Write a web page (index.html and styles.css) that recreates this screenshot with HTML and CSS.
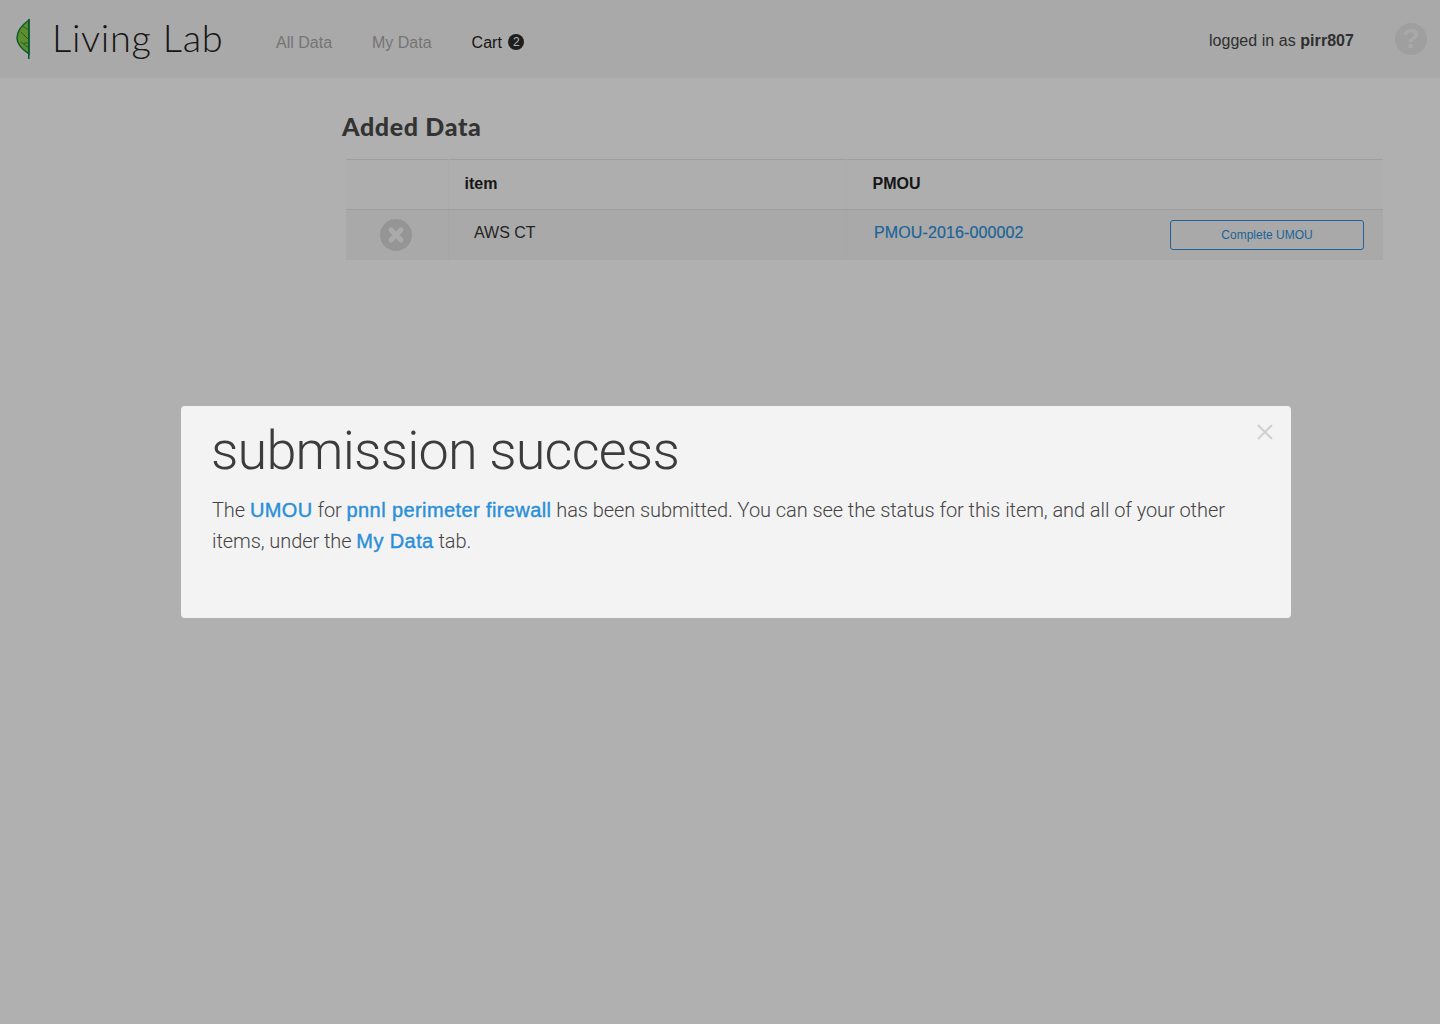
FILE: index.html
```html
<!DOCTYPE html>
<html lang="en">
<head>
    <meta charset="UTF-8">
    <meta name="viewport" content="width=device-width, initial-scale=1.0">
    <title>Living Lab</title>
    <link rel="stylesheet" href="styles.css">
</head>
<body>

    <!-- Top navigation -->
    <header class="topbar">
        <a class="brand" href="#">
            <svg class="leaf" width="16" height="42" viewBox="0 0 16 42">
                <path d="M13 2 C6 7 1 13 1 20 C1 27 7 32 13 36 Z" fill="#88cc40" stroke="#118045" stroke-width="1.5"/>
                <path d="M12.8 1 V41" stroke="#118045" stroke-width="1.6" fill="none"/>
                <path d="M13 12 L6 8 M13 22 L5 14 M13 30 L5 24 M8 25 L12 25" stroke="#118045" stroke-width="0.8" fill="none"/>
            </svg>
            <span class="brand-name">Living Lab</span>
        </a>
        <nav class="nav">
            <a class="nav-link" href="#">All Data</a>
            <a class="nav-link" href="#">My Data</a>
            <a class="nav-link active" href="#">Cart <span class="cart-count">2</span></a>
        </nav>
        <div class="user">logged in as <b>pirr807</b></div>
        <a class="help" href="#">?</a>
    </header>

    <!-- Cart contents -->
    <main class="content">
        <h1 class="page-title">Added Data</h1>
        <table class="data-table">
            <thead>
                <tr>
                    <th class="col-remove"></th>
                    <th class="col-item">item</th>
                    <th class="col-pmou">PMOU</th>
                    <th class="col-action"></th>
                </tr>
            </thead>
            <tbody>
                <tr>
                    <td class="cell-remove">
                        <svg width="32" height="32" viewBox="0 0 32 32">
                            <circle cx="16" cy="16" r="16" fill="#d6d6d6"/>
                            <path d="M11 11 L21 21 M21 11 L11 21" stroke="#f4f4f4" stroke-width="5" stroke-linecap="round"/>
                        </svg>
                    </td>
                    <td class="cell-item">AWS CT</td>
                    <td class="cell-pmou"><a href="#">PMOU-2016-000002</a></td>
                    <td class="cell-action"><button type="button" class="btn-outline">Complete UMOU</button></td>
                </tr>
            </tbody>
        </table>
    </main>

    <!-- Success dialog -->
    <div class="overlay">
        <div class="modal">
            <button type="button" class="modal-close">
                <svg width="18" height="18" viewBox="0 0 18 18">
                    <path d="M2 2 L16 16 M16 2 L2 16" stroke="#cfcfcf" stroke-width="2" fill="none"/>
                </svg>
            </button>
            <h2 class="modal-title">submission success</h2>
            <p class="modal-text">The <a href="#">UMOU</a> for <a href="#">pnnl perimeter firewall</a> has been submitted. You can see the status for this item, and all of your other items, under the <a href="#">My Data</a> tab.</p>
        </div>
    </div>

</body>
</html>
```

FILE: styles.css
```css
* {
    box-sizing: border-box;
}
body {
    font-family: "Liberation Sans", Arial, sans-serif;
    margin: 0;
    padding: 0;
    min-height: 1024px;
    background-color: #fcfcfc;
    color: #333;
}
a {
    text-decoration: none;
}

.topbar {
    display: flex;
    align-items: center;
    height: 78px;
    background-color: #f3f3f3;
    padding-left: 16px;
}
.brand {
    display: flex;
    align-items: center;
    width: 260px;
    color: #222;
}
.brand-name {
    font-family: Lato, sans-serif;
    font-weight: 300;
    font-size: 38px;
    letter-spacing: 0.7px;
    margin-left: 20px;
    margin-top: -5px;
}
.nav {
    display: flex;
    gap: 40px;
    flex: 1;
    margin-top: 7px;
}
.nav-link {
    font-size: 16px;
    color: #a8a8a8;
}
.nav-link.active {
    color: #222;
}
.cart-count {
    display: inline-block;
    width: 16px;
    height: 16px;
    margin-left: 2px;
    border-radius: 50%;
    background-color: #2b2b2b;
    color: #fff;
    font-size: 12px;
    line-height: 16px;
    text-align: center;
    vertical-align: 2px;
}
.user {
    font-size: 16px;
    letter-spacing: 0.05px;
    color: #444;
    margin-right: 41px;
    margin-top: 3px;
}
.help {
    width: 32px;
    height: 32px;
    margin-right: 13px;
    border-radius: 50%;
    background-color: #e4e4e4;
    color: #f3f3f3;
    font-weight: bold;
    font-size: 28px;
    line-height: 32px;
    text-align: center;
}

.content {
    padding-left: 342px;
    padding-right: 57px;
}
.page-title {
    font-family: Lato, sans-serif;
    font-weight: 900;
    font-size: 25px;
    letter-spacing: 0.65px;
    line-height: 30px;
    margin: 33px 0 18px;
    color: #4a4a4a;
}
.data-table {
    width: 1037px;
    margin-left: 4px;
    border-collapse: collapse;
    table-layout: fixed;
    border-top: 1px solid #e3e3e3;
}
.data-table th {
    height: 50px;
    padding: 0 0 2px;
    text-align: left;
    font-size: 16px;
    color: #222;
    background-color: #fafafa;
    border-bottom: 1px solid #e3e3e3;
}
.col-remove {
    width: 102px;
    border-right: 1px solid #f5f5f5;
}
.col-item {
    width: 398px;
    padding-left: 16px !important;
    border-right: 1px solid #f7f7f7;
}
.col-pmou {
    width: 325px;
    padding-left: 26px !important;
}
.data-table td {
    height: 50px;
    padding: 0;
    background-color: #f3f3f3;
    font-size: 16px;
    color: #333;
}
.cell-remove {
    border-right: 1px solid #eee;
}
.cell-remove svg {
    display: block;
    margin: 1px 0 0 34px;
}
.cell-item {
    padding: 0 0 3px 25.5px !important;
    border-right: 1px solid #eee;
}
.cell-pmou {
    padding: 0 0 3px 27.5px !important;
}
.cell-pmou a {
    color: #2a8fd8;
    letter-spacing: 0.12px;
    -webkit-text-stroke: 0.2px #2a8fd8;
}
.btn-outline {
    display: block;
    width: 194px;
    height: 30px;
    margin-left: -1px;
    background: transparent;
    border: 1px solid #2a8fd8;
    border-radius: 3px;
    color: #2a8fd8;
    font-family: inherit;
    font-size: 12px;
}

.overlay {
    position: fixed;
    top: 0;
    left: 0;
    right: 0;
    bottom: 0;
    padding: 406px 0 0 181px;
    background-color: rgba(0, 0, 0, 0.3);
}
.modal {
    position: relative;
    width: 1110px;
    height: 212px;
    padding: 13px 31px 0;
    background-color: #f3f3f3;
    border-radius: 4px;
}
.modal-close {
    position: absolute;
    top: 17px;
    right: 17px;
    padding: 0;
    border: none;
    background: none;
}
.modal-title {
    font-family: Roboto, sans-serif;
    font-weight: 300;
    font-size: 54px;
    letter-spacing: -0.8px;
    line-height: 64px;
    margin: 0 0 12px -1px;
    color: #3c3c3c;
}
.modal-text {
    font-family: Roboto, sans-serif;
    font-weight: 300;
    font-size: 20px;
    letter-spacing: -0.07px;
    line-height: 31px;
    margin: 0;
    color: #444;
}
.modal-text a {
    font-family: "Liberation Sans", Arial, sans-serif;
    font-weight: normal;
    letter-spacing: 0.4px;
    color: #2a8fd8;
    -webkit-text-stroke: 0.4px #2a8fd8;
}
```
